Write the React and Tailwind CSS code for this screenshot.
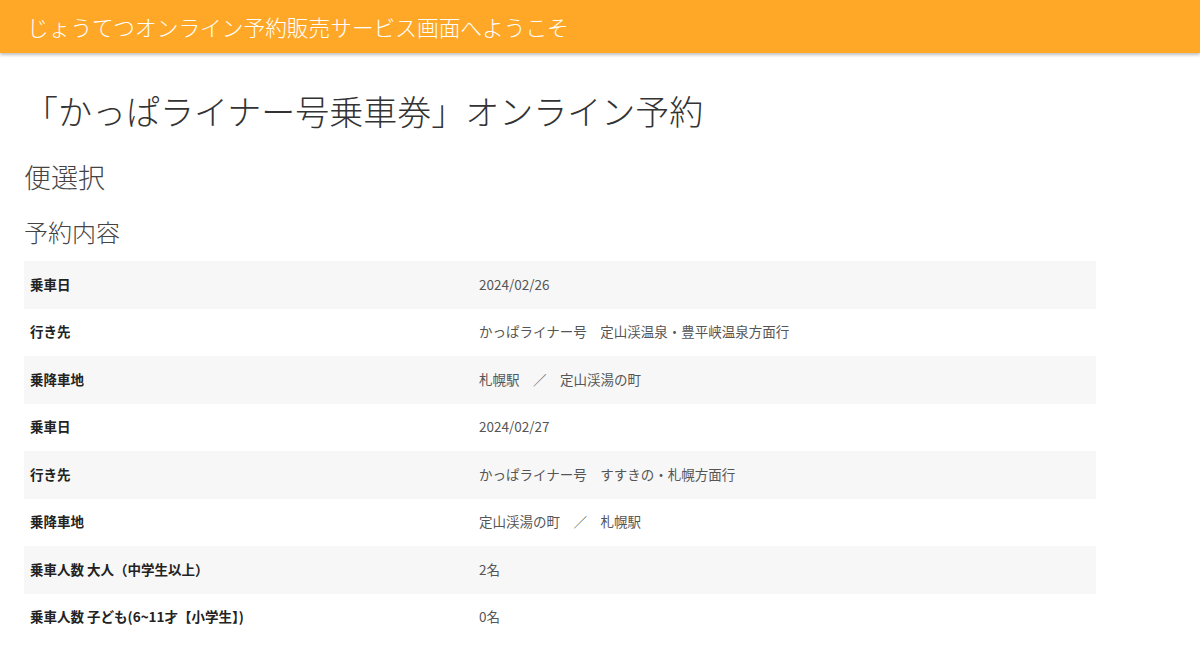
import React from "react";

const rows = [
  ["乗車日", "2024/02/26"],
  ["行き先", "かっぱライナー号　定山渓温泉・豊平峡温泉方面行"],
  ["乗降車地", "札幌駅　／　定山渓湯の町"],
  ["乗車日", "2024/02/27"],
  ["行き先", "かっぱライナー号　すすきの・札幌方面行"],
  ["乗降車地", "定山渓湯の町　／　札幌駅"],
  ["乗車人数 大人（中学生以上）", "2名"],
  ["乗車人数 子ども(6~11才【小学生】)", "0名"],
];

export default function App() {
  return (
    <div
      className="min-h-[656px] bg-white text-[#333]"
      style={{ fontFamily: '"Noto Sans CJK JP", "Noto Sans", sans-serif' }}
    >
      <header className="h-[53px] bg-[#ffa828] shadow-[0_2px_3px_rgba(0,0,0,0.25)] flex items-center px-[27px]">
        <h1 className="text-white text-[21.7px] font-light leading-none">
          じょうてつオンライン予約販売サービス画面へようこそ
        </h1>
      </header>
      <main className="px-[24px]">
        <h2 className="mt-[36px] text-[34px] font-light leading-[44px] text-[#333] pl-[0px]">
          「かっぱライナー号乗車券」オンライン予約
        </h2>
        <h3 className="mt-[27px] text-[27px] font-light leading-[34px] text-[#444]">
          便選択
        </h3>
        <h4 className="mt-[22px] text-[24px] font-light leading-[32px] text-[#444]">
          予約内容
        </h4>
        <table className="mt-[13px] w-[1072px] border-collapse">
          <tbody>
            {rows.map(([k, v], i) => (
              <tr key={i} className={i % 2 === 0 ? "bg-[#f7f7f7]" : "bg-white"}>
                <th className="w-[455px] h-[47.5px] text-left pl-[6px] pb-[2px] text-[13.5px] font-bold text-[#222] align-middle">
                  {k}
                </th>
                <td className="h-[47.5px] text-left pb-[2px] text-[13.5px] text-[#555] align-middle">
                  {v}
                </td>
              </tr>
            ))}
          </tbody>
        </table>
      </main>
    </div>
  );
}
